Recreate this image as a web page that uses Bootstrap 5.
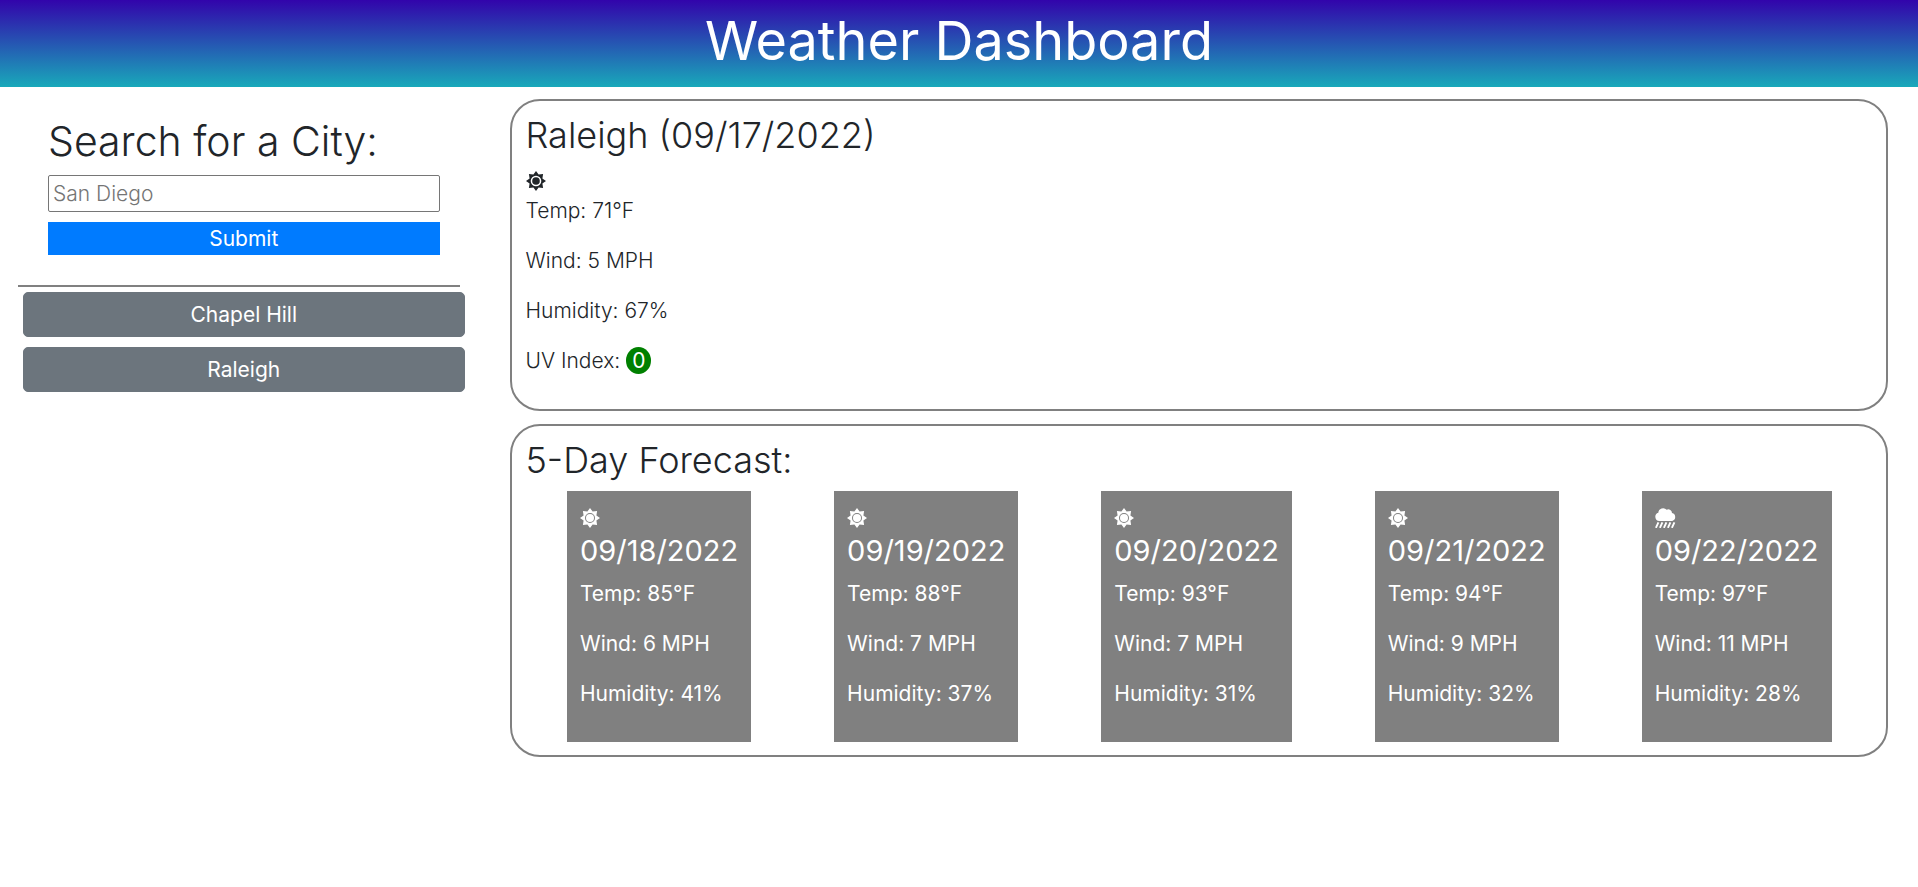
<!DOCTYPE html>
<html lang="en">
<head>
<meta charset="utf-8">
<meta name="viewport" content="width=device-width, initial-scale=1">
<title>Weather Dashboard</title>
<link href="https://cdn.jsdelivr.net/npm/bootstrap@5.3.0/dist/css/bootstrap.min.css" rel="stylesheet">
<style>
  body { font-family: Inter, "Open Sans", sans-serif; font-size: 21px; line-height: 30px; font-weight: 400; color: #212529; }
  .masthead { background: linear-gradient(#3204ab, #19a9ba); padding: 11px 16px 16px; }
  .masthead h1 { font-size: 54px; line-height: 60px; font-weight: 400; }
  .side { padding: 0 15px 0 18px; }
  .search-form { padding: 30px 20px 30px 30px; margin-right: 5px; border-bottom: 2px solid gray; }
  .search-form h2 { font-size: 41px; line-height: 48px; font-weight: 300; margin-bottom: 10px; }
  .city-input { height: 37px; border: 1px solid #767676; border-radius: 2px; padding: 1px 4px; font-weight: 300; }
  .city-input::placeholder { color: #757575; }
  .btn-submit { height: 33px; background: #007bff; border: 0; margin-top: 10px; }
  .history { margin: 5px 0 0 5px; gap: 10px; }
  .history .btn { --bs-btn-bg: #6c757d; --bs-btn-border-color: #6c757d; --bs-btn-font-size: 21px; --bs-btn-border-radius: 5px; height: 45px; line-height: 30px; }
  .main-col { padding: 12px 30px; }
  .panel { border: 2px solid gray; border-radius: 30px; padding: 13px 13px 13px 14px; margin-bottom: 13px; }
  .panel h3 { font-size: 36px; line-height: 42px; font-weight: 300; margin-bottom: 10px; }
  .panel p { margin-bottom: 20px; }
  .today p { font-weight: 300; }
  .wx { display: block; width: 20px; height: 20px; fill: currentColor; }
  .today .wx { margin: 15px 0 5px; }
  .uv { background: green; color: #fff; border-radius: 50%; padding: 1px 6px; font-weight: 400; }
  .day { background: gray; color: #fff; padding: 13px; }
  .day .wx { margin: 4px 0 5px; }
  .day .wx-rain { width: 21px; }
  .day h4 { font-size: 29px; line-height: 36px; font-weight: 400; margin-bottom: 10px; }
</style>
</head>
<body>
<svg class="d-none" aria-hidden="true">
  <symbol id="sun-bold" viewBox="0 0 20 20">
    <path fill-rule="evenodd" d="M10 0 12.6 3.6 17.1 2.9 16.4 7.4 20 10 16.4 12.6 17.1 17.1 12.6 16.4 10 20 7.4 16.4 2.9 17.1 3.6 12.6 0 10 3.6 7.4 2.9 2.9 7.4 3.6ZM10 4.7a5.3 5.3 0 1 0 0 10.600a5.3 5.3 0 0 0 0-10.600Z"/>
    <circle cx="10" cy="10" r="3.8"/>
  </symbol>
  <symbol id="sun-thin" viewBox="0 0 20 20">
    <path fill-rule="evenodd" d="M10 0 12.6 3.6 17.1 2.9 16.4 7.4 20 10 16.4 12.6 17.1 17.1 12.6 16.4 10 20 7.4 16.4 2.9 17.1 3.6 12.6 0 10 3.6 7.4 2.9 2.9 7.4 3.6ZM10 5a5 5 0 1 0 0 10a5 5 0 0 0 0-10Z"/>
    <circle cx="10" cy="10" r="4"/>
  </symbol>
  <symbol id="rain" viewBox="0 0 21 20">
    <path d="M4.2 12.9A4.2 4.2 0 0 1 3.3 4.7A4.9 4.9 0 0 1 11.7 1.7A3.7 3.7 0 0 1 17 5.1A4 4 0 0 1 17.2 12.9Z"/>
    <path d="M3.4 14.3 .9 19.8M7.4 14.3 4.9 19.8M11.4 14.3 8.9 19.8M15.4 14.3 12.9 19.8M19.4 14.3 16.9 19.8" stroke="currentColor" stroke-width="1.9"/>
  </symbol>
</svg>

<header class="masthead text-white text-center">
  <h1 class="mb-0">Weather Dashboard</h1>
</header>

<div class="container-fluid px-0">
  <div class="row g-0">
    <aside class="col-3 side">
      <form class="search-form d-flex flex-column">
        <h2><label for="city">Search for a City:</label></h2>
        <input id="city" class="city-input w-100" type="text" placeholder="San Diego">
        <button type="button" class="btn-submit text-white w-100">Submit</button>
      </form>
      <div class="history d-flex flex-column">
        <button type="button" class="btn btn-secondary">Chapel Hill</button>
        <button type="button" class="btn btn-secondary">Raleigh</button>
      </div>
    </aside>

    <main class="col-9 main-col">
      <section class="panel today">
        <h3>Raleigh (09/17/2022)</h3>
        <svg class="wx"><use href="#sun-bold"/></svg>
        <p>Temp: 71°F</p>
        <p>Wind: 5 MPH</p>
        <p>Humidity: 67%</p>
        <p>UV Index: <span class="uv">0</span></p>
      </section>

      <section class="panel">
        <h3>5-Day Forecast:</h3>
        <div class="d-flex justify-content-around">
          <article class="day">
            <svg class="wx"><use href="#sun-thin"/></svg>
            <h4>09/18/2022</h4>
            <p>Temp: 85°F</p>
            <p>Wind: 6 MPH</p>
            <p>Humidity: 41%</p>
          </article>
          <article class="day">
            <svg class="wx"><use href="#sun-thin"/></svg>
            <h4>09/19/2022</h4>
            <p>Temp: 88°F</p>
            <p>Wind: 7 MPH</p>
            <p>Humidity: 37%</p>
          </article>
          <article class="day">
            <svg class="wx"><use href="#sun-thin"/></svg>
            <h4>09/20/2022</h4>
            <p>Temp: 93°F</p>
            <p>Wind: 7 MPH</p>
            <p>Humidity: 31%</p>
          </article>
          <article class="day">
            <svg class="wx"><use href="#sun-thin"/></svg>
            <h4>09/21/2022</h4>
            <p>Temp: 94°F</p>
            <p>Wind: 9 MPH</p>
            <p>Humidity: 32%</p>
          </article>
          <article class="day">
            <svg class="wx wx-rain"><use href="#rain"/></svg>
            <h4>09/22/2022</h4>
            <p>Temp: 97°F</p>
            <p>Wind: 11 MPH</p>
            <p>Humidity: 28%</p>
          </article>
        </div>
      </section>
    </main>
  </div>
</div>
<script src="https://cdn.jsdelivr.net/npm/bootstrap@5.3.0/dist/js/bootstrap.bundle.min.js"></script>
</body>
</html>
